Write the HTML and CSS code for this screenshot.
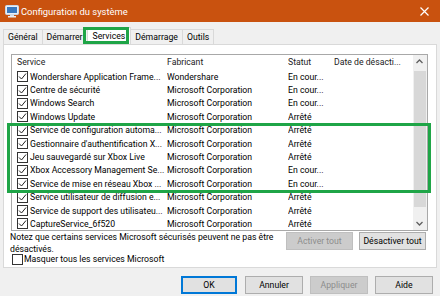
FILE: index.html
```html
<!DOCTYPE html>
<html lang="fr">
<head>
    <meta charset="UTF-8">
    <title>Configuration du système</title>
    <link rel="stylesheet" href="styles.css">
</head>
<body>
    <div class="window">
        <div class="titlebar">
            <svg class="app-icon" width="14" height="14" viewBox="0 0 14 14">
                <rect x="0.5" y="1.5" width="13" height="9" rx="1" fill="#e8eef6" stroke="#c9d6e6"/>
                <rect x="2" y="3" width="10" height="6" fill="#3a78bd"/>
                <rect x="5" y="10.5" width="4" height="1.5" fill="#d7dde6"/>
                <rect x="3" y="12" width="8" height="1.5" fill="#e8eef6"/>
            </svg>
            <span class="title">Configuration du système</span>
            <svg class="close" width="9" height="9" viewBox="0 0 9 9">
                <path d="M0.5 0.5 L8.5 8.5 M8.5 0.5 L0.5 8.5" stroke="#fff" stroke-width="1.2"/>
            </svg>
        </div>

        <div class="tabs">
            <span class="tab">Général</span>
            <span class="tab">Démarrer</span>
            <span class="tab active">Services</span>
            <span class="tab">Démarrage</span>
            <span class="tab">Outils</span>
        </div>

        <div class="panel">
            <div class="list">
                <div class="list-body">
                    <div class="row head">
                        <span>Service</span>
                        <span>Fabricant</span>
                        <span>Statut</span>
                        <span>Date de désacti...</span>
                    </div>
                    <div class="row"><span class="svc"><i class="check on"></i>Wondershare Application Frame...</span><span>Wondershare</span><span>En cour...</span><span></span></div>
                    <div class="row"><span class="svc"><i class="check on"></i>Centre de sécurité</span><span>Microsoft Corporation</span><span>En cour...</span><span></span></div>
                    <div class="row"><span class="svc"><i class="check on"></i>Windows Search</span><span>Microsoft Corporation</span><span>En cour...</span><span></span></div>
                    <div class="row"><span class="svc"><i class="check on"></i>Windows Update</span><span>Microsoft Corporation</span><span>Arrêté</span><span></span></div>
                    <div class="row"><span class="svc"><i class="check on"></i>Service de configuration automa...</span><span>Microsoft Corporation</span><span>Arrêté</span><span></span></div>
                    <div class="row"><span class="svc"><i class="check on"></i>Gestionnaire d'authentification X...</span><span>Microsoft Corporation</span><span>Arrêté</span><span></span></div>
                    <div class="row"><span class="svc"><i class="check on"></i>Jeu sauvegardé sur Xbox Live</span><span>Microsoft Corporation</span><span>Arrêté</span><span></span></div>
                    <div class="row"><span class="svc"><i class="check on"></i>Xbox Accessory Management Se...</span><span>Microsoft Corporation</span><span>En cour...</span><span></span></div>
                    <div class="row"><span class="svc"><i class="check on"></i>Service de mise en réseau Xbox ...</span><span>Microsoft Corporation</span><span>En cour...</span><span></span></div>
                    <div class="row"><span class="svc"><i class="check on"></i>Service utilisateur de diffusion e...</span><span>Microsoft Corporation</span><span>Arrêté</span><span></span></div>
                    <div class="row"><span class="svc"><i class="check on"></i>Service de support des utilisateu...</span><span>Microsoft Corporation</span><span>Arrêté</span><span></span></div>
                    <div class="row"><span class="svc"><i class="check on"></i>CaptureService_6f520</span><span>Microsoft Corporation</span><span>Arrêté</span><span></span></div>
                </div>
                <div class="scrollbar">
                    <svg class="arrow" width="13" height="14" viewBox="0 0 13 14">
                        <path d="M3.5 8 L6.5 5 L9.5 8" fill="none" stroke="#606060" stroke-width="1.3"/>
                    </svg>
                    <div class="track"><div class="thumb"></div></div>
                    <svg class="arrow" width="13" height="14" viewBox="0 0 13 14">
                        <path d="M3.5 6 L6.5 9 L9.5 6" fill="none" stroke="#606060" stroke-width="1.3"/>
                    </svg>
                </div>
            </div>

            <div class="actions">
                <p class="note">Notez que certains services Microsoft sécurisés peuvent ne pas être désactivés.</p>
                <button class="btn" disabled>Activer tout</button>
                <button class="btn">Désactiver tout</button>
            </div>

            <label class="hide-ms"><i class="check"></i>Masquer tous les services Microsoft</label>
        </div>

        <div class="footer">
            <button class="btn default">OK</button>
            <button class="btn">Annuler</button>
            <button class="btn" disabled>Appliquer</button>
            <button class="btn">Aide</button>
        </div>

        <!-- green markers drawn over the screenshot -->
        <div class="mark mark-tab"></div>
        <div class="mark mark-rows"></div>
    </div>
</body>
</html>
```

FILE: styles.css
```css
* {
    box-sizing: border-box;
    margin: 0;
    padding: 0;
}

body {
    width: 440px;
    height: 296px;
    overflow: hidden;
    background-color: #f0f0f0;
    font-family: Roboto, "Noto Sans", sans-serif;
    font-size: 8.7px;
    color: #000;
}

.window {
    position: relative;
    height: 296px;
}

.titlebar {
    display: flex;
    align-items: center;
    height: 22px;
    padding: 0 11px 0 5px;
    background-color: #c9520f;
    color: #fff;
}

.app-icon {
    margin-right: 2px;
}

.title {
    flex: 1;
    font-size: 9.4px;
}

.tabs {
    display: flex;
    align-items: flex-end;
    height: 22px;
    padding-left: 3px;
}

.tab {
    height: 15px;
    line-height: 14px;
    padding: 0 4px;
    border: 1px solid #d9d9d9;
    border-bottom: none;
    margin-right: -1px;
    background-color: #f0f0f0;
}

.tab.active {
    height: 17px;
    line-height: 16px;
    padding: 0 5px;
    background-color: #fff;
    position: relative;
    z-index: 1;
}

.panel {
    height: 224px;
    margin: 0 3px;
    padding: 9px 9px 0 7px;
    background-color: #fff;
    border: 1px solid #d9d9d9;
}

.list {
    display: flex;
    height: 177px;
    margin-right: -1px;
    border: 1px solid #a8a8a8;
}

.list-body {
    flex: 1;
    overflow: hidden;
}

.row {
    display: grid;
    grid-template-columns: 150px 121px 46px 1fr;
    align-items: center;
    height: 13.4px;
    padding-left: 5px;
    white-space: nowrap;
}

.row span {
    overflow: hidden;
}

.row.head {
    height: 15px;
    padding-bottom: 1px;
    color: #222;
}

.svc {
    display: flex;
    align-items: center;
}

.check {
    display: inline-block;
    flex: none;
    width: 11px;
    height: 11px;
    margin-right: 2px;
    border: 1px solid #333;
    background-color: #fff;
}

.check.on {
    background: #fff url("data:image/svg+xml,%3Csvg xmlns='http://www.w3.org/2000/svg' width='9' height='9' viewBox='0 0 9 9'%3E%3Cpath d='M1 4.5 L3.5 7 L8 1.5' fill='none' stroke='%23222' stroke-width='1'/%3E%3C/svg%3E") no-repeat center;
}

.scrollbar {
    display: flex;
    flex-direction: column;
    width: 14px;
    background-color: #f0f0f0;
}

.track {
    flex: 1;
    padding: 2px 1px 0;
}

.thumb {
    height: 136px;
    background-color: #d8d8d8;
}

.actions {
    display: flex;
    align-items: flex-start;
    gap: 6px;
    height: 21px;
    margin-left: -1px;
    padding-right: 1px;
}

.note {
    flex: 1;
    line-height: 12px;
    padding-right: 4px;
}

.btn {
    height: 18px;
    font-family: inherit;
    font-size: 8.7px;
    color: #000;
    background-color: #e1e1e1;
    border: 1px solid #adadad;
}

.actions .btn {
    width: 67px;
    margin-top: 1px;
}

.btn:disabled {
    color: #8d8d8d;
    background-color: #cccccc;
    border-color: #bfbfbf;
}

.hide-ms {
    display: flex;
    align-items: center;
    height: 14px;
    margin-left: 1px;
}

.hide-ms .check {
    width: 11px;
    height: 11px;
    margin-right: 1px;
}

.footer {
    display: flex;
    justify-content: flex-end;
    gap: 7px;
    padding: 8px 7px 0 0;
}

.footer .btn {
    width: 58px;
}

.footer .btn.default {
    width: 56px;
    border: 2px solid #0078d7;
    margin-right: 1px;
}

.mark {
    position: absolute;
    border: 3px solid #1fa547;
    z-index: 2;
}

.mark-tab {
    left: 83px;
    top: 27px;
    width: 46px;
    height: 17px;
}

.mark-rows {
    left: 7px;
    top: 123px;
    width: 424px;
    height: 70px;
}
```
